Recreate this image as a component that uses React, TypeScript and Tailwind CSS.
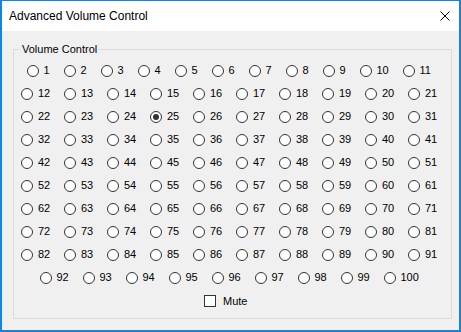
const rows: number[][] = [
  [1, 2, 3, 4, 5, 6, 7, 8, 9, 10, 11],
  [12, 13, 14, 15, 16, 17, 18, 19, 20, 21],
  [22, 23, 24, 25, 26, 27, 28, 29, 30, 31],
  [32, 33, 34, 35, 36, 37, 38, 39, 40, 41],
  [42, 43, 44, 45, 46, 47, 48, 49, 50, 51],
  [52, 53, 54, 55, 56, 57, 58, 59, 60, 61],
  [62, 63, 64, 65, 66, 67, 68, 69, 70, 71],
  [72, 73, 74, 75, 76, 77, 78, 79, 80, 81],
  [82, 83, 84, 85, 86, 87, 88, 89, 90, 91],
  [92, 93, 94, 95, 96, 97, 98, 99, 100],
];

const selected = 25;

function widthFor(n: number) {
  if (n < 10) return "w-[37px]";
  if (n < 100) return "w-[43px]";
  return "w-[49px]";
}

function Radio({ value }: { value: number }) {
  const on = value === selected;
  return (
    <label className={`flex shrink-0 items-center ${widthFor(value)}`}>
      <span className="flex h-[12px] w-[12px] items-center justify-center rounded-full border border-[#333333] bg-white">
        {on && <span className="h-[6px] w-[6px] rounded-full bg-[#333333]" />}
      </span>
      <span className="ml-[5px]">{value}</span>
    </label>
  );
}

export default function App() {
  return (
    <div className="flex h-[332px] w-[461px] flex-col border-2 border-t border-[#1883d7] bg-[#f0f0f0] font-['Liberation_Sans',Arial,sans-serif] text-[11px] text-black">
      <div className="flex h-[30px] shrink-0 items-center justify-between bg-white pl-[7px] pr-[9px]">
        <span className="text-[12px]">Advanced Volume Control</span>
        <svg width="10" height="10" viewBox="0 0 10 10" className="mt-[-1px]">
          <path d="M0.5 0.5 L9.5 9.5 M9.5 0.5 L0.5 9.5" stroke="#000" strokeWidth="1" fill="none" />
        </svg>
      </div>

      <div className="px-[11px] pt-[11px]">
        <fieldset className="h-[277px] border border-[#dcdcdc]">
          <legend className="ml-[6px] px-[2px] text-[11px] leading-[14px]">Volume Control</legend>
          <div className="ml-[7px] mt-[3px] w-[430px]">
            {rows.map((row, i) => (
              <div key={i} className="flex h-[23px] items-center justify-center">
                {row.map((n) => (
                  <Radio key={n} value={n} />
                ))}
              </div>
            ))}
            <div className="flex h-[23px] items-center pt-[1px] pl-[183px]">
              <span className="h-[12px] w-[12px] border border-[#333333] bg-white" />
              <span className="ml-[7px]">Mute</span>
            </div>
          </div>
        </fieldset>
      </div>
    </div>
  );
}
